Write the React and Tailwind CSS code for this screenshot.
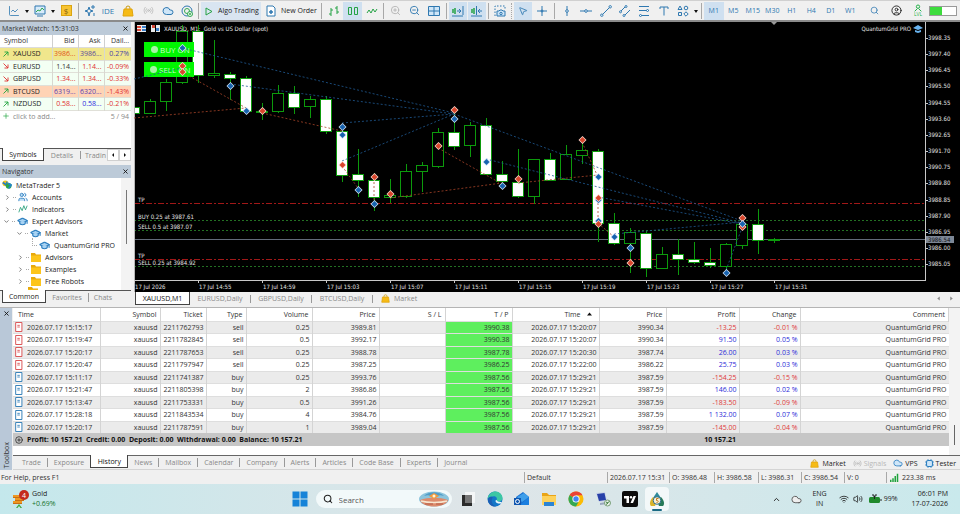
import {
    ChartLine, ChevronDown, ChevronRight, ChevronUp, CircleUser, Cloud, CirclePlus, GraduationCap,
    MousePointer2, Plus, Radio, Search, Users, Volume2, Wifi, X, ZoomIn, ZoomOut
} from 'lucide-react';

const quotes = [
    { symbol: 'XAUUSD', up: true, bid: '3986...', ask: '3986...', daily: '0.27%', row: 'bg-[#f0e68c]', bidColor: 'text-[#e0561c]', askColor: 'text-[#5a4a9c]', dailyColor: 'text-[#4a3fa8]' },
    { symbol: 'EURUSD', up: false, bid: '1.14...', ask: '1.14...', daily: '-0.09%', row: 'bg-[#f3fff3]', bidColor: 'text-[#333]', askColor: 'text-[#e03030]', dailyColor: 'text-[#e03030]' },
    { symbol: 'GBPUSD', up: false, bid: '1.34...', ask: '1.34...', daily: '-0.33%', row: 'bg-[#f3fff3]', bidColor: 'text-[#e03030]', askColor: 'text-[#e03030]', dailyColor: 'text-[#e03030]' },
    { symbol: 'BTCUSD', up: true, bid: '6319...', ask: '6320...', daily: '-1.43%', row: 'bg-[#ffd3b5]', bidColor: 'text-[#5a3fb0]', askColor: 'text-[#5a3fb0]', dailyColor: 'text-[#e03030]' },
    { symbol: 'NZDUSD', up: true, bid: '0.58...', ask: '0.58...', daily: '-0.21%', row: 'bg-[#f3fff3]', bidColor: 'text-[#e03030]', askColor: 'text-[#2c2ce0]', dailyColor: 'text-[#e03030]' }
];

const deals = [
    ['2026.07.17 15:15:17', '2211762793', 'sell', '0.25', '3989.81', '3990.38', '2026.07.17 15:20:07', '3990.34', '-13.25', '-0.01 %'],
    ['2026.07.17 15:19:47', '2211782845', 'sell', '0.5', '3992.17', '3990.38', '2026.07.17 15:20:07', '3990.34', '91.50', '0.05 %'],
    ['2026.07.17 15:20:17', '2211787653', 'sell', '0.25', '3988.78', '3987.78', '2026.07.17 15:20:30', '3987.74', '26.00', '0.03 %'],
    ['2026.07.17 15:20:47', '2211797947', 'sell', '0.25', '3987.25', '3986.25', '2026.07.17 15:22:00', '3986.22', '25.75', '0.03 %'],
    ['2026.07.17 15:11:17', '2211741387', 'buy', '0.25', '3993.76', '3987.56', '2026.07.17 15:29:21', '3987.59', '-154.25', '-0.15 %'],
    ['2026.07.17 15:21:47', '2211805398', 'buy', '2', '3986.86', '3987.56', '2026.07.17 15:29:21', '3987.59', '146.00', '0.02 %'],
    ['2026.07.17 15:13:47', '2211753331', 'buy', '0.5', '3991.26', '3987.56', '2026.07.17 15:29:21', '3987.59', '-183.50', '-0.09 %'],
    ['2026.07.17 15:28:18', '2211843534', 'buy', '4', '3984.76', '3987.56', '2026.07.17 15:29:21', '3987.59', '1 132.00', '0.07 %'],
    ['2026.07.17 15:20:17', '2211787591', 'buy', '1', '3989.04', '3987.56', '2026.07.17 15:29:21', '3987.59', '-145.00', '-0.04 %']
];

// [falling, body top, body bottom, high, low], one per minute, 16 units apart
const candles = [
    [1, 107, 113, 107, 113], [0, 101, 113, 99, 113], [0, 82, 101, 79, 111], [0, 31, 82, 25, 84],
    [1, 31, 75, 25, 83], [0, 73, 75, 40, 78], [1, 74, 78, 72, 100], [1, 78, 111, 76, 111],
    [0, 111, 111, 103, 120], [0, 93, 111, 85, 113], [1, 93, 107, 86, 114], [0, 99, 106, 96, 118],
    [1, 99, 131, 96, 134], [1, 131, 175, 125, 182], [1, 174, 180, 149, 197], [1, 180, 197, 173, 211],
    [0, 195, 197, 179, 203], [0, 171, 196, 164, 198], [0, 165, 171, 162, 192], [0, 132, 166, 128, 168],
    [1, 132, 146, 110, 150], [0, 125, 145, 122, 157], [1, 125, 174, 118, 175], [1, 174, 181, 161, 187],
    [1, 182, 196, 149, 198], [0, 159, 196, 159, 204], [1, 159, 180, 153, 181], [0, 154, 179, 145, 180],
    [0, 150, 155, 139, 164], [1, 151, 223, 149, 242], [1, 223, 243, 213, 245], [0, 232, 243, 228, 273],
    [1, 233, 268, 231, 277], [0, 254, 268, 247, 269], [1, 254, 259, 239, 275], [1, 259, 262, 242, 264],
    [1, 262, 265, 248, 268], [0, 244, 266, 243, 273], [0, 224, 245, 217, 249], [1, 224, 240, 209, 254],
    [0, 239, 240, 238, 243]
];

const buyTrails = [
    [134, 79, 182, 68], [182, 48, 454, 113], [230, 84, 454, 114], [342, 123, 454, 114], [342, 161, 454, 114],
    [454, 114, 742, 221], [486, 159, 742, 223], [598, 197, 742, 224], [614, 234, 742, 222], [726, 270, 742, 228]
];

const sellTrails = [
    [182, 72, 246, 108], [134, 118, 246, 108], [262, 113, 342, 131], [342, 166, 358, 188], [374, 178, 374, 202],
    [390, 198, 502, 183], [438, 148, 502, 184], [518, 183, 598, 175], [582, 142, 598, 177], [598, 199, 598, 222],
    [598, 223, 614, 237]
];

const buyMarks = [
    [182, 48], [230, 86], [246, 111], [342, 127], [342, 135], [358, 190], [374, 204], [454, 119], [486, 162],
    [502, 186], [598, 177], [598, 200], [614, 237], [598, 221], [630, 248], [726, 273]
];

const sellMarks = [
    [182, 66], [182, 72], [262, 111], [342, 165], [374, 177], [390, 194], [438, 146], [454, 110], [518, 179],
    [582, 140], [598, 198], [598, 224], [630, 263], [742, 218], [742, 227]
];

const prices = ['3998.35', '3997.40', '3996.45', '3995.50', '3994.55', '3993.60', '3992.65', '3991.70', '3990.75', '3989.80', '3988.85', '3987.90', '3986.95', '3986.00', '3985.05'];
const times = ['2026', '14:55', '14:59', '15:03', '15:07', '15:11', '15:15', '15:19', '15:23', '15:27', '15:31'];

const levels = [
    { y: 203, label: 'TP', kind: 'tp' },
    { y: 220, label: 'BUY 0.25 at 3987.61', kind: 'open' },
    { y: 230, label: 'SELL 0.5 at 3987.07', kind: 'open' },
    { y: 259, label: 'TP', kind: 'tp' },
    { y: 266, label: 'SELL 0.25 at 3984.92', kind: 'open' }
];

function Svg({ children, size = 12, className = '' }) {
    return (
        <svg width={size} height={size} viewBox="0 0 12 12" fill="none" stroke="currentColor" strokeWidth="1" className={`shrink-0 ${className}`} aria-hidden="true">
            {children}
        </svg>
    );
}

function Sep() {
    return <span className="mx-0.5 h-4 w-px shrink-0 bg-[#a8a8a8]" />;
}

function Tool({ label, width = 'w-5', active = false, children }) {
    return (
        <button
            type="button"
            aria-label={label}
            className={`flex h-[18px] shrink-0 items-center justify-center ${width} ${active ? 'bg-[#cfe0f0]' : ''}`}
        >
            {children}
        </button>
    );
}

function Caret() {
    return (
        <svg width="6" height="12" viewBox="0 0 6 12" className="shrink-0" aria-hidden="true">
            <path d="M1 5h4L3 8z" fill="#111" />
        </svg>
    );
}

function Bag({ size = 10 }) {
    return (
        <Svg size={size}>
            <path d="M4 5V3a2 2 0 0 1 4 0v2" stroke="#c99a10" />
            <path d="M2 4h8l1 7H1z" fill="#f6bb16" stroke="#e0a40c" />
        </Svg>
    );
}

function Toolbar() {
    return (
        <div className="flex h-[22px] items-center overflow-hidden border-b-2 border-[#8b8b8b] border-t border-t-[#d0d0d0] bg-[#f0f0f0] pl-1 text-[#2f78b0]">
            <Tool label="Chart type"><ChartLine size={12} strokeWidth={1.6} /></Tool>
            <Caret />
            <Tool label="Indicators">
                <Svg>
                    <path d="M1 1h10v8H1zM3 11h6" fill="#d8ebfa" />
                    <path d="M2 7l2-2 2 1 2-3 2 2" stroke="#2fa84f" />
                </Svg>
            </Tool>
            <Caret />
            <Tool label="Deposit">
                <span className="flex h-[11px] w-[11px] items-center justify-center border border-[#dba511] bg-[#f7c331] text-[8px] leading-none text-[#8a6410]">$</span>
            </Tool>
            <Sep />
            <Tool label="Assistant" width="w-[17px]">
                <Svg>
                    <path d="M5 2l1 3 3 1-3 1-1 4-1-4-3-1 3-1zM9 0v4M7 2h4M10 8v3" />
                </Svg>
            </Tool>
            <Tool label="IDE">
                <span className="text-[8px]">IDE</span>
            </Tool>
            <Tool label="Market"><Bag size={12} /></Tool>
            <Tool label="Signals"><Radio size={11} strokeWidth={1.6} className="text-[#b4b4b4]" /></Tool>
            <Tool label="VPS" width="w-[19px]"><Cloud size={12} strokeWidth={2} fill="#cfe6f8" /></Tool>
            <Tool label="Copy trading" width="w-[19px]">
                <Svg>
                    <circle cx="6" cy="6" r="5" />
                    <circle cx="6" cy="6" r="2.5" stroke="#34a853" />
                    <circle cx="9" cy="9" r="2.5" fill="#e8f7ea" stroke="#34a853" />
                    <path d="M8 9h2M9 8v2" stroke="#34a853" />
                </Svg>
            </Tool>
            <Sep />
            <button type="button" className="flex h-[18px] w-[60px] shrink-0 items-center gap-[3px] bg-[#d9e5f1] pl-0.5 whitespace-nowrap text-[#222]">
                <Svg className="text-[#25a244]"><path d="M3 3l6 3.5L3 10z" /></Svg>
                Algo Trading
            </button>
            <button type="button" className="flex h-[18px] w-[58px] shrink-0 items-center gap-1 pl-1 whitespace-nowrap text-[#222]">
                <Svg className="text-[#2f78b0]">
                    <path d="M2 1h6l2 2v8H2z" fill="#fff" />
                    <path d="M6 5v4M4 7h4" strokeWidth="1.5" />
                </Svg>
                New Order
            </button>
            <Sep />
            <Tool label="Bars" width="w-[19px]">
                <Svg className="text-[#25a244]"><path d="M3 3v8M1 9h2M3 5h2M9 1v8M7 3h2M9 7h2" /></Svg>
            </Tool>
            <Tool label="Candles" width="w-[19px]" active>
                <Svg className="text-[#25a244]"><path d="M1.5 2.5h3v7h-3zM7.5 2.5h3v7h-3z" /></Svg>
            </Tool>
            <Tool label="Line" width="w-[19px]">
                <Svg className="text-[#25a244]"><path d="M1 8l2-3 2 3 2-4 2 3 2-3" /></Svg>
            </Tool>
            <Sep />
            <Tool label="Zoom in" width="w-[18px]"><ZoomIn size={11} className="text-[#b5b5b5]" /></Tool>
            <Tool label="Zoom out"><ZoomOut size={11} /></Tool>
            <Tool label="Tile windows">
                <Svg><path d="M0.5 1.5h11v9H.5zM6 1.500v9M.5 6h11" fill="#cfe6f8" /></Svg>
            </Tool>
            <Sep />
            <Tool label="Auto scroll" width="w-[18px]" active>
                <Svg>
                    <path d="M1 4v4M3 3v6" stroke="#25a244" strokeWidth="1.5" />
                    <path d="M5 6h4M7 4l2 2-2 2M11 1v9M0 11h11" />
                </Svg>
            </Tool>
            <span className="w-px" />
            <Tool label="Chart shift" width="w-[18px]" active>
                <Svg>
                    <path d="M1 4v4M3 3v6" stroke="#25a244" strokeWidth="1.5" />
                    <path d="M5.5 1v9M7 6h4M9 4L7 6l2 2M0 11h11" />
                </Svg>
            </Tool>
            <Sep />
            <Tool label="Screenshot" width="w-[18px]">
                <Svg>
                    <path d="M1 11V1h10v3" strokeDasharray="1.5 1.5" />
                    <path d="M3 6h2l1-1h2l1 1h2v5H3z" fill="#cfe6f8" />
                    <circle cx="7" cy="8.5" r="1.2" />
                </Svg>
            </Tool>
            <span className="mx-0.5 h-4 shrink-0 border-l border-dotted border-[#a8a8a8]" />
            <Tool label="Cursor" width="w-[18px]" active><MousePointer2 size={10} /></Tool>
            <Tool label="Crosshair">
                <Svg><path d="M6 1v10M1 6h10" /><circle cx="6" cy="6" r="1" /></Svg>
            </Tool>
            <Sep />
            <div className="grid w-[136px] shrink-0 grid-cols-7">
                <Tool label="Vertical line" width="w-full"><Svg><path d="M6 1v10" /><circle cx="6" cy="6" r="1.3" fill="#fff" /></Svg></Tool>
                <Tool label="Horizontal line" width="w-full"><Svg><path d="M0 6h12" /><circle cx="6" cy="6" r="1.3" fill="#fff" /></Svg></Tool>
                <Tool label="Trend line" width="w-full">
                    <Svg><path d="M2 10l8-8" /><circle cx="1.8" cy="10.2" r="1.2" fill="#fff" /><circle cx="10.2" cy="1.8" r="1.2" fill="#fff" /></Svg>
                </Tool>
                <Tool label="Channel" width="w-full">
                    <Svg><path d="M1 7l6-6M5 11l6-6" /><circle cx="1.5" cy="6.8" r="1" fill="#fff" /><circle cx="7" cy="1.5" r="1" fill="#fff" /><circle cx="5" cy="10.5" r="1" fill="#fff" /></Svg>
                </Tool>
                <Tool label="Fibonacci" width="w-full">
                    <Svg><path d="M1 1.5h10M1 5.5h10M1 10.5h10" /><circle cx="9.5" cy="5.5" r="1" fill="#fff" /><circle cx="2.5" cy="10.5" r="1" fill="#fff" /></Svg>
                </Tool>
                <Tool label="Text" width="w-full"><Svg><path d="M2 4V2h8v2M6 2v8.5" /></Svg></Tool>
                <Tool label="Shapes" width="w-full">
                    <Svg><path d="M3 1l2 3.5H1zM1.5 7.5h3v3h-3z" /><circle cx="9" cy="3" r="1.8" /><path d="M9 6.8L11.2 9 9 11.2 6.8 9z" /></Svg>
                </Tool>
            </div>
            <Caret />
            <Sep />
            <div className="grid w-[156px] shrink-0 grid-cols-8">
                {['M1', 'M5', 'M15', 'M30', 'H1', 'H4', 'D1', 'W1'].map((frame) => (
                    <Tool key={frame} label={frame} width="w-full" active={frame === 'M1'}>{frame}</Tool>
                ))}
            </div>
            <div className="flex shrink-0 items-center pl-1">
                <Tool label="Search"><Search size={9} /></Tool>
                <Tool label="Account" width="w-6"><CircleUser size={11} className="text-[#222]" /></Tool>
                <Tool label="Level">
                    <span className="flex flex-col items-center text-[5px] leading-[5px] text-[#25b34a]">
                        <Svg size={8}><circle cx="6" cy="4" r="2.5" strokeWidth="1.5" /><path d="M1 11l4-4M11 11L7 7" strokeWidth="1.5" /></Svg>
                        LVL
                    </span>
                </Tool>
                <span className="ml-px flex h-[10px] w-7 border border-[#9a9a9a] bg-white"><i className="w-3 bg-[#3ddc3d]" /></span>
            </div>
        </div>
    );
}

function PanelTitle({ children }) {
    return (
        <div className="flex h-[13px] items-center justify-between bg-[#bccad8] pr-0.5 pl-0.5 text-[#333]">
            <h2>{children}</h2>
            <button type="button" aria-label="Close"><X size={7} strokeWidth={3} className="text-[#111]" /></button>
        </div>
    );
}

function MarketWatch() {
    return (
        <section className="flex h-[139px] flex-col bg-white">
            <PanelTitle>Market Watch: 15:31:03</PanelTitle>
            <table className="w-full table-fixed">
                <colgroup>
                    <col />
                    <col className="w-[26px]" />
                    <col className="w-[26px]" />
                    <col className="w-[27px]" />
                </colgroup>
                <thead>
                    <tr className="h-3 border-b border-[#dcdcdc] text-right text-[#333]">
                        <th className="p-0 pl-1 text-left font-normal">Symbol</th>
                        <th className="border-l border-[#d0d0d0] p-0 pr-[3px] font-normal">Bid</th>
                        <th className="border-l border-[#d0d0d0] p-0 pr-[3px] font-normal">Ask</th>
                        <th className="border-l border-[#d0d0d0] p-0 pr-0.5 font-normal">Dail...</th>
                    </tr>
                </thead>
                <tbody>
                    {quotes.map((q) => (
                        <tr key={q.symbol} className={`border-b border-[#e0e0d8] text-right odd:h-[13px] even:h-3 ${q.row}`}>
                            <td className="p-0 text-left text-[#222]">
                                <div className="flex items-center gap-1 pl-[3px]">
                                    <Svg size={6} className={q.up ? 'text-[#1fa33c]' : 'text-[#e03030]'}>
                                        <path d={q.up ? 'M1 11l9-9M3 2h7v7' : 'M1 1l9 9M10 3v7H3'} strokeWidth="1.800" />
                                    </Svg>
                                    {q.symbol}
                                </div>
                            </td>
                            <td className={`border-l border-[#d8d8d0] p-0 pr-0.5 ${q.bidColor}`}>{q.bid}</td>
                            <td className={`border-l border-[#d8d8d0] p-0 pr-0.5 ${q.askColor}`}>{q.ask}</td>
                            <td className={`border-l border-[#d8d8d0] p-0 pr-0.5 ${q.dailyColor}`}>{q.daily}</td>
                        </tr>
                    ))}
                </tbody>
            </table>
            <div className="flex items-center justify-between pr-0.5 pl-0.5 text-[#888]">
                <button type="button" className="flex items-center gap-[3px]">
                    <Plus size={8} className="text-[#1fa33c]" /> click to add...
                </button>
                <span>5 / 94</span>
            </div>
            <div className="mt-auto flex h-[13px] items-stretch border-t border-[#555] bg-[#f0f0f0] text-[#888]">
                <button type="button" className="-mt-px ml-0.5 w-[42px] border border-t-0 border-[#444] bg-white text-[#222]">Symbols</button>
                <button type="button" className="w-9">Details</button>
                <span className="my-0.5 w-px bg-[#999]" />
                <button type="button" className="w-[26px] pl-1 text-left">Tradin</button>
                <button type="button" aria-label="Previous tab" className="flex w-3 items-center justify-center border border-[#d0d0d0] bg-white"><Svg size={6}><path d="M8 2v8L4 6z" fill="#111" stroke="none" /></Svg></button>
                <button type="button" aria-label="Next tab" className="flex w-3 items-center justify-center border border-[#d0d0d0] bg-white"><Svg size={6}><path d="M4 2v8l4-4z" fill="#111" stroke="none" /></Svg></button>
            </div>
        </section>
    );
}

function Folder() {
    return (
        <svg width="10" height="9" viewBox="0 0 10 9" className="shrink-0" aria-hidden="true">
            <path d="M0 0h4l1 1.500h5V9H0z" fill="#e8a90c" />
            <path d="M0 2.500h10V9H0z" fill="#fdc51b" />
        </svg>
    );
}

function Branch({ indent, open, leaf = false, icon, children }) {
    const Arrow = open ? ChevronDown : ChevronRight;

    return (
        <li className={`flex h-3 items-center gap-0.5 whitespace-nowrap ${indent}`}>
            {leaf ? (
                <span className="mb-1.5 ml-0.5 h-2 w-[5px] border-b border-l border-dotted border-[#aaa]" />
            ) : (
                <>
                    <Arrow size={7} strokeWidth={2.5} className="shrink-0 text-[#555]" />
                    <span className="w-[3px] border-t border-dotted border-[#aaa]" />
                </>
            )}
            {icon}
            <span className="pl-0.5">{children}</span>
        </li>
    );
}

function Navigator() {
    const cap = <GraduationCap size={11} strokeWidth={2.5} fill="#a9d3f3" className="shrink-0 text-[#2f80c0]" />;

    return (
        <section className="flex flex-col bg-white">
            <PanelTitle>Navigator</PanelTitle>
            <div className="flex h-28 overflow-hidden text-[#222]">
                <ul className="flex-1 pt-px">
                    <li className="flex h-3 items-center gap-1 pl-0.5">
                        <Svg size={10}>
                            <circle cx="4" cy="4" r="3.500" fill="#f2c31a" stroke="none" />
                            <path d="M1 3l4 3 1-4" stroke="#2f80c0" strokeWidth="2" />
                            <circle cx="8" cy="7" r="3.500" fill="#2aa84a" stroke="none" />
                            <path d="M7 4l4 2-3 4" stroke="#2585c7" strokeWidth="2" />
                        </Svg>
                        MetaTrader 5
                    </li>
                    <Branch indent="pl-1" icon={<Users size={10} fill="#b9dcf5" className="shrink-0 text-[#2f80c0]" />}>Accounts</Branch>
                    <Branch indent="pl-1" icon={<Svg size={10} className="text-[#25a07a]"><path d="M1 10l2-6 2 4 2-6 2 5 2-5" /></Svg>}>Indicators</Branch>
                    <Branch indent="pl-[3px]" open icon={cap}>Expert Advisors</Branch>
                    <Branch indent="pl-4" open icon={cap}>Market</Branch>
                    <Branch indent="pl-[30px]" leaf icon={cap}>QuantumGrid PRO</Branch>
                    <Branch indent="pl-[17px]" icon={<Folder />}>Advisors</Branch>
                    <Branch indent="pl-[17px]" icon={<Folder />}>Examples</Branch>
                    <Branch indent="pl-[17px]" icon={<Folder />}>Free Robots</Branch>
                    <li className="pl-7"><Folder /></li>
                </ul>
                <div className="w-[10px] bg-[#f3f3f3] pt-3"><div className="mx-auto h-[54px] w-px bg-[#777]" /></div>
            </div>
            <div className="flex h-[14px] border-t border-[#555] bg-[#f0f0f0] text-[#888]">
                <button type="button" className="-mt-px mb-px ml-0.5 w-11 border border-t-0 border-[#444] bg-white text-[#222]">Common</button>
                <button type="button" className="w-[42px]">Favorites</button>
                <span className="my-0.5 w-px bg-[#999]" />
                <button type="button" className="w-7">Chats</button>
            </div>
        </section>
    );
}

function Mark({ x, y, buy = false }) {
    return (
        <g transform={`translate(${x + 0.5} ${y})`}>
            <path d="M0-4L4 0 0 4-4 0z" fill={buy ? '#cfe2f8' : '#ffd9cc'} />
            <path d="M0-3L3 0 0 3-3 0z" fill={buy ? '#1762ae' : '#d8452c'} />
        </g>
    );
}

function Chart() {
    return (
        <div className="relative bg-black">
            <svg viewBox="134 22 826 270" className="block h-auto w-full" role="img" aria-label="XAUUSD one minute candles">
                {levels.map(({ y, kind }) => (
                    <path
                        key={y}
                        d={`M134 ${y + 0.5}H925`}
                        stroke={kind === 'tp' ? '#a01818' : '#237023'}
                        strokeDasharray={kind === 'tp' ? '6 2 2 2' : '2 2'}
                    />
                ))}
                <path d="M134 239.500H925" stroke="#636b7a" />
                {candles.map(([falling, top, bottom, high, low], i) => {
                    const x = 134 + i * 16;
                    return (
                        <g key={x} stroke="#0c9a0c" fill={falling ? '#fff' : '#000'}>
                            <path d={`M${x + 0.5} ${high}V${low}`} />
                            <rect x={x - 5.500} y={top + 0.5} width="11" height={Math.max(bottom - top, 1)} />
                        </g>
                    );
                })}
                <path d="M134.500 22V292" stroke="#b8b8b8" />
                <path d="M134 280.500H926M925.500 22V280" stroke="#c8c8c8" fill="none" />
                <path d="M771 22h6l-3 3z" fill="#999" />
                <g className="font-['DejaVu_Sans_Condensed','DejaVu_Sans',sans-serif] text-[6px]" fill="#e4e4e4">
                    {levels.map(({ y, label }) => (
                        <text key={y} x="138" y={y - 1}>{label}</text>
                    ))}
                    {prices.map((price, i) => (
                        <g key={price}>
                            <path d={`M926 ${Math.round(38 + i * 16.16)}.5h2`} stroke="#c8c8c8" />
                            <text x="928" y={Math.round(40 + i * 16.16)}>{price}</text>
                        </g>
                    ))}
                    {times.map((time, i) => (
                        <g key={time}>
                            <path d={`M${134 + i * 64}.5 281v2`} stroke="#c8c8c8" />
                            <text x={135 + i * 64} y="289">17 Jul {time}</text>
                        </g>
                    ))}
                    <rect x="926" y="236" width="28" height="7" fill="#7d8796" />
                    <text x="928" y="242" fill="#111">3986.54</text>
                    <text x="164" y="31" xmlSpace="preserve">XAUUSD, M1:  Gold vs US Dollar (spot)</text>
                    <text x="911" y="31" textAnchor="end">QuantumGrid PRO</text>
                </g>
                <path d="M137 25h9v7h-9z" fill="#eee" />
                <path d="M137 26h4v2h-4zM137 29h4v2h-4z" fill="#d84a3a" />
                <path d="M142 26h4v2h-4zM142 29h4v2h-4z" fill="#3c80c8" />
                <path d="M151 25h4v7h-4z" fill="#e9e9e9" />
                <path d="M152 25h3v3h-3z" fill="#d84a3a" />
                <path d="M156 25h4v7h-4z" fill="#e9e9e9" />
                <path d="M156 28h3v3h-3z" fill="#3c80c8" />
                <path d="M913 28l5-3 5 3-5 2zM915 30v2l3 1 3-1v-2l-3 1z" fill="#69b4ef" />
            </svg>
            <button type="button" className="absolute top-5 left-[10px] flex h-[15px] w-[50px] items-center gap-0.5 bg-[#00f600] pl-[7px] text-[8px] text-[#c8ffc8]">
                <i className="h-[7px] w-[7px] rounded-full bg-[#a6f5a6]" /> BUY ON
            </button>
            <button type="button" className="absolute top-10 left-[10px] flex h-[15px] w-[50px] items-center gap-0.5 bg-[#00f600] pl-1.5 text-[8px] text-[#c8ffc8]">
                <i className="h-[7px] w-[7px] rounded-full bg-[#a6f5a6]" /> SELL ON
            </button>
            {/* trade history sits above the panel buttons */}
            <svg viewBox="134 22 826 270" className="pointer-events-none absolute inset-0 h-full w-full" aria-hidden="true">
                {buyTrails.map(([x1, y1, x2, y2]) => (
                    <line key={`${x1}-${y1}`} x1={x1} y1={y1} x2={x2} y2={y2} stroke="#1f5a94" strokeWidth="0.8" strokeDasharray="2 2" />
                ))}
                {sellTrails.map(([x1, y1, x2, y2]) => (
                    <line key={`${x1}-${y1}`} x1={x1} y1={y1} x2={x2} y2={y2} stroke="#a84428" strokeWidth="0.8" strokeDasharray="2 2" />
                ))}
                {buyMarks.map(([x, y]) => <Mark key={`${x}-${y}`} x={x} y={y} buy />)}
                {sellMarks.map(([x, y]) => <Mark key={`${x}-${y}`} x={x} y={y} />)}
                <Mark x={742} y={224} buy />
            </svg>
        </div>
    );
}

function ChartTabs() {
    return (
        <div className="flex h-[15px] items-start text-[#888]">
            <button type="button" className="ml-px h-[13px] w-[55px] border border-t-0 border-[#444] bg-white text-[#111]">XAUUSD,M1</button>
            {['EURUSD,Daily', 'GBPUSD,Daily', 'BTCUSD,Daily'].map((name) => (
                <div key={name} className="flex h-[13px] w-[61px] items-center">
                    <button type="button" className="flex-1">{name}</button>
                    <span className="h-2 w-px bg-[#999]" />
                </div>
            ))}
            <button type="button" className="flex h-[13px] items-center gap-1 pl-2"><Bag size={9} /> Market</button>
            <div className="ml-auto flex h-[13px] items-center gap-2 pr-1.5">
                <button type="button" aria-label="Scroll left"><Svg size={5}><path d="M9 1v10L3 6z" fill="#888" stroke="none" /></Svg></button>
                <button type="button" aria-label="Scroll right"><Svg size={5}><path d="M3 1v10l6-5z" fill="#888" stroke="none" /></Svg></button>
            </div>
        </div>
    );
}

function History() {
    const heads = ['Symbol', 'Ticket', 'Type', 'Volume', 'Price', 'S / L', 'T / P', 'Time', 'Price', 'Profit', 'Change', 'Comment'];
    const widths = ['w-[87px]', 'w-[60px]', 'w-[46px]', 'w-[40px]', 'w-[66px]', 'w-[67px]', 'w-[66px]', 'w-[67px]', 'w-[87px]', 'w-[67px]', 'w-[73px]', 'w-[61px]', ''];
    const cell = 'border-r border-[#d4d4d4] p-0 pr-0.5';

    return (
        <table className="w-full table-fixed border-collapse text-right whitespace-nowrap text-[#333]">
            <colgroup>
                {widths.map((width, i) => <col key={i} className={width} />)}
            </colgroup>
            <thead>
                <tr className="h-[13px] bg-white">
                    <th className={`${cell} pl-[5px] text-left font-normal`}>Time</th>
                    {heads.map((head, i) => (
                        <th key={i} className="border-r border-[#d4d4d4] p-0 pr-[3px] font-normal">
                            {head === 'Time' ? (
                                <div className="flex items-center justify-end gap-1.5 pr-1">
                                    Time
                                    <svg width="5" height="4" viewBox="0 0 5 4" aria-hidden="true"><path d="M0 3.500h5L2.500.5z" fill="#111" /></svg>
                                </div>
                            ) : head}
                        </th>
                    ))}
                </tr>
            </thead>
            <tbody>
                {deals.map(([time, ticket, type, volume, price, tp, closed, exit, profit, change]) => {
                    const tone = profit.startsWith('-') ? 'text-[#e03a3a]' : 'text-[#2c2cd8]';
                    return (
                        <tr key={ticket} className="border-t border-[#dedede] odd:h-3 odd:bg-[#ebebeb] even:h-[13px] even:bg-white">
                            <td className={cell}>
                                <div className="flex items-center gap-[3px] pl-px">
                                    <Svg size={10} className={type === 'sell' ? 'text-[#d9484a]' : 'text-[#2878b4]'}>
                                        <path d="M2 0.600h7.500v10.800H2z" fill="#fff" strokeWidth="1.100" />
                                        <path d="M4 4h3M4 6h3" />
                                    </Svg>
                                    {time}
                                </div>
                            </td>
                            <td className={cell}>xauusd</td>
                            <td className={cell}>{ticket}</td>
                            <td className={cell}>{type}</td>
                            <td className={cell}>{volume}</td>
                            <td className={cell}>{price}</td>
                            <td className={cell} />
                            <td className={`${cell} bg-[#5eef5e]`}>{tp}</td>
                            <td className={cell}>{closed}</td>
                            <td className={cell}>{exit}</td>
                            <td className={`${cell} ${tone}`}>{profit}</td>
                            <td className={`${cell} ${tone}`}>{change}</td>
                            <td className="p-0 pr-0.5">QuantumGrid PRO</td>
                        </tr>
                    );
                })}
            </tbody>
            <tfoot>
                <tr className="h-[13px] bg-[#c6c6c6] font-bold text-[#111]">
                    <td colSpan={10} className="p-0">
                        <div className="flex items-center gap-1 pl-0.5">
                            <CirclePlus size={8} />
                            <span className="whitespace-pre">Profit: 10 157.21  Credit: 0.00  Deposit: 0.00  Withdrawal: 0.00  Balance: 10 157.21</span>
                        </div>
                    </td>
                    <td className="p-0 pr-[3px]">10 157.21</td>
                    <td colSpan={2} className="p-0" />
                </tr>
            </tfoot>
        </table>
    );
}

function Toolbox() {
    const tabs = ['Trade', 'Exposure', 'History', 'News', 'Mailbox', 'Calendar', 'Company', 'Alerts', 'Articles', 'Code Base', 'Experts', 'Journal'];

    return (
        <section className="flex border-t border-[#b4b4b4]">
            <div className="flex w-3 shrink-0 flex-col items-center justify-between bg-[#b9c8d8] pt-0.5 pb-0.5 text-[#333]">
                <button type="button" aria-label="Close"><X size={7} strokeWidth={3} className="text-[#111]" /></button>
                <h2 className="rotate-180 [writing-mode:vertical-rl]">Toolbox</h2>
            </div>
            <div className="min-w-0 flex-1 pl-px">
                <div className="flex bg-white">
                    <div className="min-w-0 flex-1 pb-[9px]"><History /></div>
                    <div className="flex w-[11px] shrink-0 flex-col justify-end bg-[#f3f3f3] pb-[10px]"><div className="mx-auto h-5 w-px bg-[#666]" /></div>
                </div>
                <div className="flex h-[15px] items-start border-t border-[#666] border-b border-b-[#d4d4d4] text-[#888]">
                    <div className="flex h-3 items-center pl-[3px]">
                        {tabs.map((tab, i) => tab === 'History' ? (
                            <button key={tab} type="button" className="-mt-px h-[13px] w-[38px] border border-t-0 border-[#444] bg-white text-[#111]">{tab}</button>
                        ) : (
                            <button
                                key={tab}
                                type="button"
                                className={`h-[9px] px-[6px] leading-[9px] whitespace-nowrap ${tab === 'Exposure' || i === 11 ? '' : 'border-r border-[#999]'}`}
                            >
                                {tab}
                            </button>
                        ))}
                    </div>
                    <div className="ml-auto flex h-[14px] items-center gap-[7px] pr-1 text-[#222]">
                        <button type="button" className="flex items-center gap-[3px]"><Bag size={9} /> Market</button>
                        <button type="button" className="flex items-center gap-0.5 text-[#b8b8b8]"><Radio size={9} /> Signals</button>
                        <button type="button" className="flex items-center gap-0.5"><Cloud size={10} fill="#cfe6f8" className="text-[#2f80c0]" /> VPS</button>
                        <button type="button" className="flex items-center gap-0.5">
                            <Svg size={9} className="text-[#2f80c0]"><rect x="2" y="2" width="8" height="8" rx="2" fill="#cfe6f8" strokeWidth="1.500" /><path d="M4 0v2M8 0v2M4 10v2M8 10v2M0 4h2M0 8h2M10 4h2M10 8h2" /></Svg>
                            Tester
                        </button>
                    </div>
                </div>
            </div>
        </section>
    );
}

function StatusBar() {
    return (
        <footer className="flex h-[14px] items-center text-[#333] [&>span]:border-l [&>span]:border-[#a8a8a8] [&>span]:pl-0.5 [&>span]:whitespace-nowrap">
            <p className="flex-1 pl-px">For Help, press F1</p>
            <span className="w-[83px]">Default</span>
            <span className="w-[62px]">2026.07.17 15:31</span>
            <span className="w-[45px]">O: 3986.48</span>
            <span className="w-[44px]">H: 3986.58</span>
            <span className="w-[43px]">L: 3986.31</span>
            <span className="w-[43px]">C: 3986.54</span>
            <span className="w-[42px]">V: 0</span>
            <span className="flex w-[74px] items-center gap-[3px]">
                <Svg size={9} className="ml-px text-[#1fa33c]"><path d="M1 12V9M4 12V7M7 12V4M10 12V1" strokeWidth="2" /></Svg>
                223.38 ms
            </span>
        </footer>
    );
}

function AppButton({ label, active = false, children }) {
    return (
        <button
            type="button"
            aria-label={label}
            className={`flex h-6 w-6 items-center justify-center rounded-sm ${active ? 'bg-white/70' : ''}`}
        >
            <svg width="16" height="16" viewBox="0 0 16 16" aria-hidden="true">{children}</svg>
        </button>
    );
}

function Taskbar() {
    return (
        <nav className="grid min-h-[30px] grid-cols-[1fr_auto_1fr] items-center bg-linear-to-r from-[#c4e8ec] via-[#dfe5e8] to-[#c9e9ec] text-[#222]">
            <button type="button" className="flex items-center gap-[3px] pl-3 text-left leading-[10px]">
                <svg width="17" height="19" viewBox="0 0 17 19" aria-hidden="true">
                    <path d="M1 5h9v3H1zM3 8h9v3H3zM1 11h9v3H1z" fill="#ee9722" />
                    <path d="M1 7h9v1H1zM3 10h9v1H3zM1 13h9v1H1z" fill="#c86f14" />
                    <path d="M7 14l3 4H8.500l-1.500-2-1.500 2H4z" fill="#3fa83c" />
                    <circle cx="12" cy="5" r="5" fill="#c42b1c" />
                    <text x="12" y="8" textAnchor="middle" fill="#fff" className="text-[7px]">4</text>
                </svg>
                <span>
                    Gold
                    <span className="block text-[#15722a]">+0.69%</span>
                </span>
            </button>
            <div className="flex items-center gap-[3px] pr-1">
                <AppButton label="Start">
                    <path d="M0.500 0.500h7v7h-7zM8.500 0.500h7v7h-7zM0.500 8.500h7v7h-7zM8.500 8.500h7v7h-7z" fill="#1683d8" />
                </AppButton>
                <label className="ml-px flex h-[18px] w-[136px] items-center gap-1.5 rounded-full bg-[#f2f9fa] pr-0.5 pl-[7px] text-[8px]">
                    <Search size={10} strokeWidth={2.500} />
                    <input type="search" aria-label="Search" placeholder="Search" className="w-0 flex-1 outline-none placeholder:text-[#555]" />
                    <svg width="32" height="16" viewBox="0 0 32 16" aria-hidden="true">
                        <ellipse cx="16" cy="8" rx="15" ry="7.500" fill="#8cc4dc" />
                        <path d="M2 9c8-3 20-3 28 0-1 4-7 6.500-14 6.500S3 13 2 9z" fill="#dd8b6c" />
                        <path d="M3 10c7 2 19 2 26 0" fill="none" stroke="#f6e6d0" strokeWidth="1.500" />
                        <path d="M6 5c5-5 15-5 20 0-3-1-5-1-6 0-2-1-6-1-8 0-1-1-3-1-6 0z" fill="#4f9cc8" />
                        <path d="M11 5l5-3 5 3-5 3z" fill="#f09a3e" />
                        <circle cx="16" cy="5" r="1.500" fill="#fff4d8" />
                        <path d="M7 13h8M18 13h7" stroke="#b45a44" />
                    </svg>
                </label>
                <div className="flex items-center gap-[3px] pl-px">
                    <AppButton label="Task view"><path d="M5 1h10v11H5z" fill="#f4f6f7" /><path d="M2 4h10v11H2z" fill="#2b2b2b" /><path d="M5 4h7v8H5z" fill="#777" /></AppButton>
                    <AppButton label="Edge">
                        <circle cx="8" cy="8" r="7.500" fill="#1477c8" />
                        <path d="M0.600 8C1 3 5 0.500 8.500 0.500c4 0 7 3 7 6.500 0 2-1.500 3.500-4 3.500-1.500 0-2-.6-2-1.200 1-1.500 0-4-2.500-4S1.500 6 0.600 8z" fill="#3cc7a4" />
                        <path d="M6 6.500c-2.500 2-1.500 8 3.500 9-6 .8-9-4-8.500-7.500C2 6 4 5 6 6.500z" fill="#1c5fb4" />
                        <path d="M9.500 9c-1.500-.3-2 4 4.500 3.500 1-.8.800-1.500 0-1.500-2.500 0-4-.8-4.500-2z" fill="#eaf6fb" />
                    </AppButton>
                    <AppButton label="Outlook">
                        <path d="M2 6l7-5 6 5v8H3z" fill="#1a6fd0" />
                        <path d="M3 6l7-4 5 4-7 5z" fill="#3f9fea" />
                        <path d="M15 6v8H6z" fill="#1b7fe0" />
                        <path d="M0 7h7v7H0z" fill="#1157b0" />
                        <circle cx="3.500" cy="10.500" r="2" fill="none" stroke="#fff" />
                    </AppButton>
                    <AppButton label="File Explorer">
                        <path d="M1 2h5l2 2h7v10H1z" fill="#e9a416" />
                        <path d="M1 5h14v9H1z" fill="#fdd15a" />
                        <path d="M3 11h10v4H3z" fill="#2b84d4" />
                    </AppButton>
                    <AppButton label="Chrome">
                        <circle cx="8" cy="8" r="7.500" fill="#fbbc05" />
                        <path d="M8 8L1.500 4.250A7.500 7.500 0 0 1 14.500 4.250H8z" fill="#ea4335" />
                        <path d="M8 8L1.500 4.250A7.500 7.500 0 0 0 8 15.500L11 10z" fill="#34a853" />
                        <circle cx="8" cy="8" r="3.600" fill="#fff" />
                        <circle cx="8" cy="8" r="2.700" fill="#4285f4" />
                    </AppButton>
                    <AppButton label="Remote Desktop">
                        <path d="M1 2l9-1 2 9-8 1z" fill="#c9d3e6" />
                        <path d="M2 3l7.500-1 1.500 7-7 1z" fill="#2740a8" />
                        <path d="M5 12l6-1 1 2-7 1z" fill="#9aa7bd" />
                        <circle cx="12.500" cy="12" r="3" fill="#e8f0e8" stroke="#7aa07a" />
                        <path d="M11 11l2 1-2 1.500M14.500 10.500l-1.500 1" stroke="#3b7c3b" fill="none" />
                    </AppButton>
                    <AppButton label="TradingView">
                        <rect width="16" height="16" rx="2" fill="#0c0c0c" />
                        <path d="M2 5h5v7H4.500V7.500H2zM11.500 5H14l-3 7H8.500z" fill="#fff" />
                        <circle cx="9" cy="6.200" r="1.200" fill="#fff" />
                    </AppButton>
                    <div className="relative">
                        <AppButton label="MetaTrader 5" active>
                            <path d="M8 1l4 6-4 2-4-2z" fill="#2d8a9a" />
                            <path d="M4 6l4 4-2 5H2C0 13 1 9 4 6z" fill="#d8b42c" />
                            <path d="M12 6l-4 4 2 5h4c2-2 1-6-2-9z" fill="#277a58" />
                            <circle cx="8" cy="9.500" r="3.800" fill="#f7f1d8" stroke="#2f6d8a" />
                            <path d="M9.500 7.500h-2v2c2-.5 2.500 2 0 2" fill="none" stroke="#c47a1a" />
                        </AppButton>
                        <span className="absolute bottom-0 left-[7px] h-0.5 w-[10px] rounded-full bg-[#1a6a84]" />
                    </div>
                </div>
            </div>
            <div className="flex items-center justify-end pr-3 leading-[10px]">
                <button type="button" aria-label="Hidden icons" className="mr-[10px]"><ChevronUp size={9} strokeWidth={2.500} /></button>
                <Cloud size={11} fill="#eee" className="mr-[10px] text-[#555]" />
                <button type="button" className="mr-3 text-center">ENG<span className="block">IN</span></button>
                <Wifi size={10} className="mr-1" />
                <Volume2 size={10} className="mr-1.5" />
                <svg width="13" height="10" viewBox="0 0 13 10" aria-hidden="true">
                    <rect y="3" width="11" height="6" rx="1.500" fill="#1f8a2c" />
                    <path d="M12 5v2" stroke="#222" />
                    <path d="M4 0v2h3V0M5.500 2v3" stroke="#222" fill="none" />
                </svg>
                <span className="mr-[14px] ml-0.5">99%</span>
                <time className="text-right">06:01 PM<span className="block">17-07-2026</span></time>
            </div>
        </nav>
    );
}

export default function App() {
    return (
        <div className="w-full bg-[#f0f0f0] font-['Open_Sans','Noto_Sans',sans-serif] text-[7px] leading-[11px]">
            <Toolbar />
            <main>
                <div className="flex">
                    <aside className="mr-[3px] flex w-[131px] shrink-0 flex-col gap-1">
                        <MarketWatch />
                        <Navigator />
                    </aside>
                    <div className="min-w-0 flex-1">
                        <Chart />
                        <ChartTabs />
                    </div>
                </div>
                <Toolbox />
            </main>
            <StatusBar />
            <Taskbar />
        </div>
    );
}
